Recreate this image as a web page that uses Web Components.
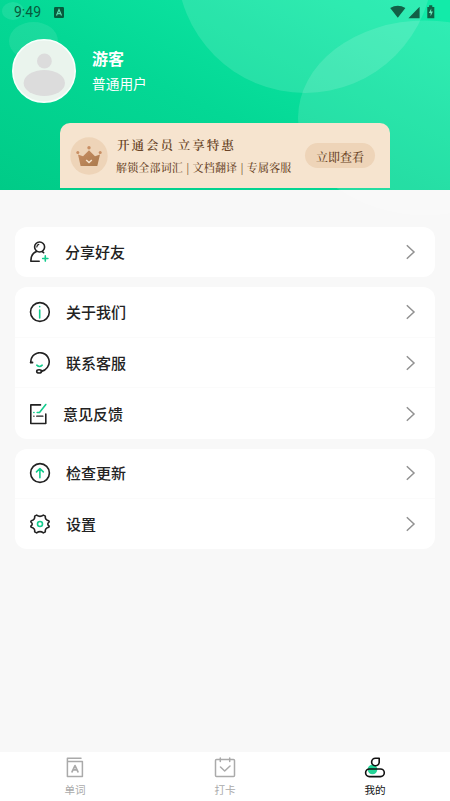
<!DOCTYPE html>
<html lang="zh-CN">
<head>
<meta charset="utf-8">
<title>我的</title>
<style>
body{margin:0;background:#f8f8f8;font-family:"Noto Sans CJK SC",sans-serif;color:#222}
</style>
</head>
<body>
<my-app></my-app>
<script>
const define = (name, html) => customElements.define(name, class extends HTMLElement {
  constructor() {
    super();
    const t = document.createElement('template');
    t.innerHTML = html;
    this.attachShadow({mode: 'open'}).appendChild(t.content.cloneNode(true));
  }
});

define('status-bar', `<style>
:host{display:flex;height:25px;align-items:center;padding:0 14px;color:#075b3d;font:14px/25px Roboto,sans-serif;box-sizing:border-box}
.a{margin-left:13px}.r{margin-left:auto}svg{display:block}</style>
<span>9:49</span>
<svg class="a" width="10" height="11"><rect width="10" height="11" rx="1.2" fill="#075b3d"/><path d="M2.5 8.5 5 2.5l2.5 6M3.5 6.7h3" fill="none" stroke="#55dfae" stroke-width="1.2"/></svg>
<svg class="r" width="46" height="15" fill="#126046"><path d="M.2 3Q7.8-1.6 15.4 3L7.8 12.8zM29.6 1.8v11.4H18.4zM37.3 2.1h1.8V.3h3.2v1.8h2v11.1h-7z"/><path d="M41.3 3.6 38.8 8h1.8v3.3l2.3-4.7h-1.8z" fill="#6bedbf"/></svg>`);

define('user-avatar', `<style>:host{display:block;width:64px;height:64px}svg{display:block}</style>
<svg width="64" height="64"><circle cx="32" cy="32" r="31.2" fill="#eaf4ed" stroke="#f8fffb" stroke-width="1.6"/><circle cx="32.4" cy="22" r="7.4" fill="#dcdcdc"/><ellipse cx="32.3" cy="44" rx="20.7" ry="13" fill="#dcdcdc"/></svg>`);

define('user-info', `<style>
:host{display:flex;align-items:flex-start;padding:14px 12px 0;color:#fff}
.t{padding:7px 0 0 16px}.n{font-weight:600;font-size:16px;line-height:24px}.s{font-size:13.7px;line-height:24px;margin-top:1px}</style>
<user-avatar></user-avatar><div class="t"><div class="n"><slot name="name"></slot></div><div class="s"><slot name="role"></slot></div></div>`);

define('vip-card', `<style>
:host{display:flex;width:330px;height:65px;margin:20px 0 0 60px;box-sizing:border-box;padding:0 15px 0 10px;align-items:center;background:#f6e4cf;border-radius:10px 10px 0 0;color:#6a4427;font-family:"Noto Serif CJK SC","Noto Sans CJK SC",serif}
svg{display:block;flex:none}.t{margin-left:8px;flex:1;white-space:nowrap}
.h{font-size:12.5px;font-weight:600;line-height:21px;letter-spacing:2px;word-spacing:-2.5px;margin:1px 0 0 1px}.s{font-size:11px;line-height:20px;font-weight:500;letter-spacing:.16px;margin-top:.5px}
.b{width:70px;height:25px;border-radius:13px;background:#eed4b8;text-align:center;font-size:12px;line-height:27px;font-weight:500;flex:none}</style>
<svg width="38" height="38"><defs><linearGradient id="g" x1="0" y1="0" x2="1" y2="1"><stop stop-color="#c98f64"/><stop offset="1" stop-color="#a9794c"/></linearGradient></defs><circle cx="19" cy="19" r="18.7" fill="#eed4b8"/><path d="M8 17.5 13 19.2 19 13.2 25 19.2 30 17.5 27.3 29H10.6z" fill="url(#g)"/><g fill="#c98f64"><circle cx="19" cy="10.8" r="1.7"/><circle cx="7.8" cy="15.5" r="1.5"/><circle cx="30.2" cy="15.5" r="1.5"/></g><path d="m16.2 23 2.8 2.6 2.8-2.6" fill="none" stroke="#f6e4cf" stroke-width="1.5"/></svg>
<div class="t"><div class="h"><slot name="title"></slot></div><div class="s"><slot name="detail"></slot></div></div><div class="b"><slot name="action"></slot></div>`);

define('profile-header', `<style>
:host{display:block;position:relative;height:190px;background:linear-gradient(26deg,#00cb87 0%,#04d895 45%,#12eba9 95%)}
.bg{position:absolute;left:0;top:0;pointer-events:none}.c{position:relative}</style>
<svg class="bg" width="450" height="216"><defs><clipPath id="h"><rect width="450" height="190"/></clipPath><clipPath id="l"><rect y="190" width="450" height="26"/></clipPath></defs>
<g clip-path="url(#h)"><circle cx="305" cy="-35" r="128" fill="#fff" fill-opacity=".13"/><ellipse cx="425" cy="118" rx="127" ry="97.5" fill="#fff" fill-opacity=".13"/><ellipse cx="13" cy="11" rx="11" ry="9" fill="#fff" fill-opacity=".09"/><ellipse cx="33.5" cy="41" rx="24.5" ry="19" fill="#fff" fill-opacity=".09"/></g>
<ellipse cx="425" cy="118" rx="127" ry="97.5" fill="#fff" fill-opacity=".13" clip-path="url(#l)"/></svg>
<div class="c"><slot></slot></div>`);

define('menu-group', `<style>
:host{display:block;background:#fff;border-radius:12px;margin:0 15px 10px;overflow:hidden}
::slotted(menu-row:not(:last-child)){border-bottom:1px solid #fbfbfb}</style><slot></slot>`);

define('menu-row', `<style>
:host{display:flex;height:50.4px;box-sizing:border-box;align-items:center;padding:.3px 18px 0 14px;font-weight:500;font-size:15px;color:#222}
.i{width:22px;height:22px;flex:none}.l{margin-left:var(--gap,15px);flex:1;line-height:24px}
::slotted(svg){display:block}svg{display:block}</style>
<div class="i"><slot name="icon"></slot></div><div class="l"><slot></slot></div>
<svg width="12" height="18" fill="none" stroke="#929292" stroke-width="1.5"><path d="M1.8 2.3 9 9l-7.2 6.7"/></svg>`);

define('tab-item', `<style>
:host{display:flex;flex:1;flex-direction:column;align-items:center;color:#aaa;font-size:10.6px;line-height:16px;padding-top:5px}
:host([active]){color:#111}::slotted(svg){display:block;margin-bottom:3px}</style><slot name="icon"></slot><span><slot></slot></span>`);

define('tab-bar', `<style>:host{display:flex;height:49px;background:#fff}</style><slot></slot>`);

define('my-app', `<style>
:host{display:flex;flex-direction:column;height:801px;overflow:hidden;background:#f8f8f8}
main{flex:1;padding-top:37px}
svg{fill:none;stroke:#222;stroke-width:1.6;stroke-linecap:round;stroke-linejoin:round}.g{stroke:#13cc8d}</style>
<profile-header><status-bar></status-bar>
<user-info><span slot="name">游客</span><span slot="role">普通用户</span></user-info>
<vip-card><span slot="title">开通会员 立享特惠</span><span slot="detail">解锁全部词汇 | 文档翻译 | 专属客服</span><span slot="action">立即查看</span></vip-card></profile-header>
<main>
<menu-group><menu-row style="--gap:14px"><svg slot="icon" width="22" height="22"><circle cx="10.6" cy="6" r="5"/><path d="M7.8 6Q8 3.8 9.8 3.3" stroke-width="1.2"/><path d="M7.6 10.5Q1.8 12.3 1.8 20.3H10.2M13.3 10.6 14.6 11.7"/><path class="g" d="M16.3 14.9v5.2M13.7 17.5h5.2"/></svg>分享好友</menu-row></menu-group>
<menu-group><menu-row><svg slot="icon" width="22" height="22"><circle cx="10.9" cy="11" r="9.4"/><path class="g" d="M10.7 9v8M10.7 5.6v.2"/></svg>关于我们</menu-row>
<menu-row><svg slot="icon" width="22" height="22"><path d="M1.8 10.4A9.2 9.2 0 1 1 18.4 15.4Q16.3 18.6 12.4 19.4"/><path d="M1.7 10.4H3.4" stroke-width="2"/><ellipse cx="10.1" cy="19.4" rx="2.4" ry="1.6"/><path class="g" d="M7.8 13.2Q10.5 15.8 13.2 13.2"/></svg>联系客服</menu-row>
<menu-row style="--gap:12px"><svg slot="icon" width="22" height="22"><path d="M11.5 1.9H1.8v18.6h15V11"/><path class="g" d="M16.8 1.5 10.5 9.5H8.2M4.8 9.5h.2"/><path d="M7.7 13.2h6.2M4.8 13.2h.2" stroke-width="1.3"/></svg>意见反馈</menu-row></menu-group>
<menu-group><menu-row><svg slot="icon" width="22" height="22"><circle cx="11" cy="11" r="9.4"/><path class="g" d="M10.9 15.7V7.2M7.5 9.9l3.4-3.4 3.4 3.4"/></svg>检查更新</menu-row>
<menu-row><svg slot="icon" width="22" height="22"><path d="M7.6 2.1Q11 4.7 14.4 2.1L16.3 3.1Q15.8 6.8 19.7 7.7L20.2 8.8Q17.3 11 20.2 13.2L19.7 14.3Q15.8 15.2 16.3 18.9L14.4 19.9Q11 17.3 7.6 19.9L5.7 18.9Q6.2 15.2 2.3 14.3L1.8 13.2Q4.7 11 1.8 8.8L2.3 7.7Q6.2 6.8 5.7 3.1z"/><circle class="g" cx="11" cy="11" r="2.5"/></svg>设置</menu-row></menu-group>
</main>
<tab-bar>
<tab-item><svg slot="icon" width="22" height="22" style="stroke:#aaa;stroke-width:1.5"><path d="M17 1.2H3.4V19.5H18.4V4.5H3.4"/><path d="M8 14.8 11 8.6l3 6.2M9.2 12.8h3.6" stroke-width="1.7"/></svg>单词</tab-item>
<tab-item><svg slot="icon" width="22" height="22" style="stroke:#aaa;stroke-width:1.5"><rect x="1.5" y="2.6" width="19" height="17" rx="1"/><path d="M6.3 1v3.5M15.7 1v3.5M6.5 10l4.2 4 5.3-5"/></svg>打卡</tab-item>
<tab-item active><svg slot="icon" width="22" height="22" style="stroke:#111"><circle cx="8.5" cy="12.5" r="4.8" fill="#24d597" stroke="none"/><path d="M15.2 1.2V5.4A3.8 3.8 0 1 1 11.4 1.2z"/><rect x="1.6" y="12" width="18.7" height="7.6" rx="3.8"/></svg>我的</tab-item>
</tab-bar>`);
</script>
</body>
</html>
